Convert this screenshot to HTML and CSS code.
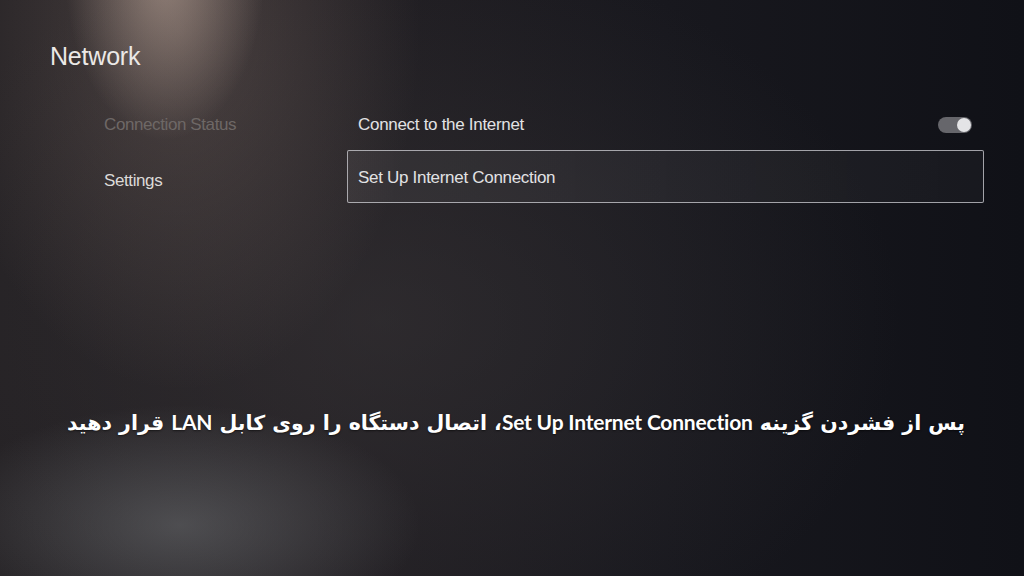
FILE: index.html
```html
<!DOCTYPE html>
<html lang="en">
<head>
<meta charset="utf-8">
<title>Network</title>
<link rel="stylesheet" href="styles.css">
</head>
<body>
<div class="screen">
  <h1 class="title">Network</h1>
  <div class="layout">
    <nav class="nav">
      <div class="nav-item nav-item--dim">Connection Status</div>
      <div class="nav-item nav-item--second">Settings</div>
    </nav>
    <div class="panel">
      <div class="row">
        <span class="row-label">Connect to the Internet</span>
        <span class="toggle"><span class="knob"></span></span>
      </div>
      <div class="row row--focused">
        <span class="row-label">Set Up Internet Connection</span>
      </div>
    </div>
  </div>
  <p class="caption" dir="rtl">پس از فشردن گزینه <span class="latin">Set Up Internet Connection</span>، اتصال دستگاه را روی کابل <span class="latin">LAN</span> قرار دهید</p>
</div>
</body>
</html>
```

FILE: styles.css
```css
* { box-sizing: border-box; }
html, body {
  margin: 0;
  padding: 0;
  width: 1024px;
  height: 576px;
  overflow: hidden;
}
body {
  font-family: "Liberation Sans", Arial, sans-serif;
  color: #e6e6e6;
  background-color: #1b1b21;
  background-image:
    radial-gradient(ellipse 100px 170px at 165px -30px, rgba(210, 185, 170, 0.55), rgba(210, 185, 170, 0) 100%),
    radial-gradient(ellipse 240px 360px at 180px 30px, rgba(140, 120, 112, 0.36), rgba(140, 120, 112, 0) 100%),
    radial-gradient(ellipse 240px 120px at 180px 525px, rgba(110, 112, 115, 0.55), rgba(110, 112, 115, 0) 100%),
    radial-gradient(ellipse 520px 380px at 380px 320px, rgba(62, 58, 60, 0.45), rgba(62, 58, 60, 0) 100%),
    linear-gradient(90deg, #242124 0%, #221f23 30%, #18181e 65%, #101117 100%);
}
.screen {
  display: flex;
  flex-direction: column;
  height: 576px;
}
.title {
  margin: 41px 0 0 0;
  padding-left: 50px;
  font-size: 25px;
  line-height: 30px;
  font-weight: normal;
  color: #ebe8e6;
  letter-spacing: -0.2px;
}
.layout {
  display: grid;
  grid-template-columns: 243px 637px;
  margin-top: 29px;
  padding-left: 104px;
}
.nav {
  display: flex;
  flex-direction: column;
}
.nav-item {
  height: 50px;
  display: flex;
  align-items: center;
  font-size: 17px;
  line-height: 20px;
  letter-spacing: -0.4px;
  color: #dcdad8;
}
.nav-item--dim { color: #6e6866; }
.nav-item--second {
  height: 53px;
  padding-top: 9px;
}
.panel {
  display: flex;
  flex-direction: column;
}
.row {
  height: 50px;
  display: flex;
  align-items: center;
  justify-content: space-between;
  padding: 0 12px 0 11px;
}
.row-label {
  font-size: 17px;
  line-height: 20px;
  letter-spacing: -0.3px;
  color: #e2e2e4;
}
.row--focused {
  height: 53px;
  border: 1.5px solid rgba(215, 215, 220, 0.72);
  border-radius: 2px;
  background: linear-gradient(90deg, rgba(255,255,255,0.06), rgba(255,255,255,0.03));
  padding-left: 10px;
  padding-top: 2px;
}
.toggle {
  width: 34px;
  height: 16px;
  border-radius: 8px;
  background: #66666b;
  display: flex;
  align-items: center;
  justify-content: flex-end;
  padding-right: 1px;
}
.knob {
  width: 14px;
  height: 14px;
  border-radius: 50%;
  background: #e4e4e6;
}
.caption {
  margin: 199px 0 0 0;
  text-align: center;
  font-family: "DejaVu Sans", "Liberation Sans", sans-serif;
  font-weight: bold;
  font-size: 20.5px;
  line-height: 40px;
  color: #ffffff;
  text-shadow: 0 1px 2px rgba(0,0,0,0.5);
  padding-left: 8px;
  white-space: nowrap;
}
.latin {
  font-family: Lato, "Liberation Sans", sans-serif;
  font-weight: bold;
  font-size: 21px;
  letter-spacing: -0.2px;
}
```
